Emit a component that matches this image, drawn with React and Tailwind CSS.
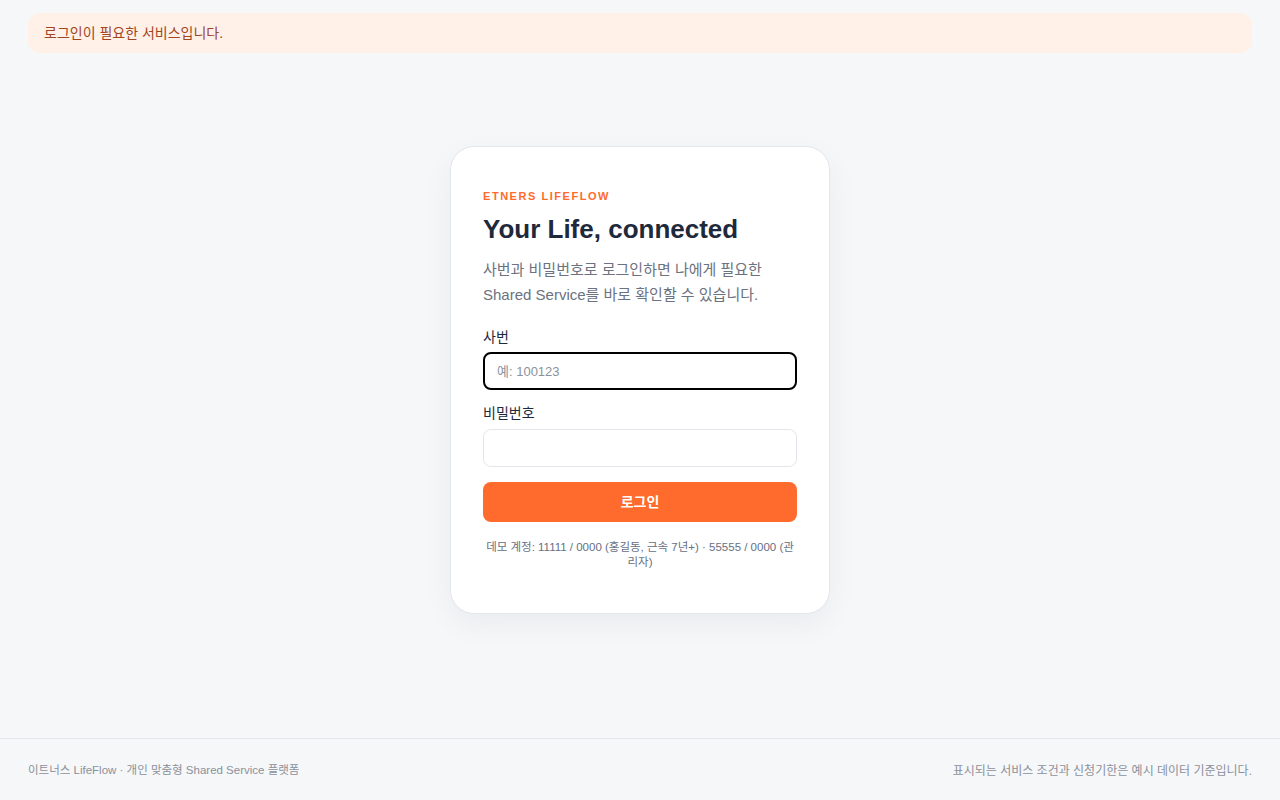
import React, { useState } from "react";

export default function App() {
  const [empNo, setEmpNo] = useState("");
  const [password, setPassword] = useState("");

  return (
    <div
      className="min-h-screen flex flex-col bg-[#f6f7f9] text-[#1e293b]"
      style={{ fontFamily: '"Liberation Sans", "Noto Sans CJK KR", sans-serif' }}
    >
      {/* Notice */}
      <div className="px-7 pt-[13px]">
        <div className="h-10 flex items-center px-4 rounded-xl bg-[#fff0e8] text-[14px] text-[#a0461f]">
          로그인이 필요한 서비스입니다.
        </div>
      </div>

      {/* Login card */}
      <main className="flex justify-center pt-[93px]">
        <div className="w-[380px] bg-white border border-[#e3e6eb] rounded-[24px] shadow-[0_10px_30px_rgba(15,23,42,0.05)] px-8 pt-[41px] pb-[43px]">
          <p className="text-[11px] font-bold tracking-[0.14em] text-[#ff6b2c] leading-4">ETNERS LIFEFLOW</p>
          <h1 className="mt-[7px] text-[26px] font-bold leading-9 text-[#1e293b]">Your Life, connected</h1>
          <p className="mt-[10px] text-[15px] leading-[25px] text-[#6b7280]">
            사번과 비밀번호로 로그인하면 나에게 필요한
            <br />
            Shared Service를 바로 확인할 수 있습니다.
          </p>

          <form className="mt-[20px] flex flex-col" onSubmit={(e) => e.preventDefault()}>
            <label className="text-[14px] leading-5 text-[#1e293b]">사번</label>
            <input
              value={empNo}
              onChange={(e) => setEmpNo(e.target.value)}
              placeholder="예: 100123"
              className="mt-[5px] h-[38px] w-full rounded-lg border-2 border-black px-3 text-[13px] text-[#1e293b] placeholder:text-[#8b929c] outline-none bg-white"
            />
            <label className="mt-[13px] text-[14px] leading-5 text-[#1e293b]">비밀번호</label>
            <input
              type="password"
              value={password}
              onChange={(e) => setPassword(e.target.value)}
              className="mt-[6px] h-[38px] w-full rounded-lg border border-[#e2e5ea] px-3 text-[13px] outline-none bg-white"
            />
            <button
              type="submit"
              className="mt-[15px] h-10 w-full rounded-lg bg-[#ff6b2c] text-white text-[14px] font-bold"
            >
              로그인
            </button>
          </form>

          <p className="mt-[18px] text-center text-[11.5px] leading-[15px] text-[#667085]">
            데모 계정: 11111 / 0000 (홍길동, 근속 7년+) · 55555 / 0000 (관리자)
          </p>
        </div>
      </main>

      {/* Footer */}
      <footer className="mt-auto h-[62px] border-t border-[#e3e6eb] px-7 pt-[2px] flex items-center justify-between text-[12px] text-[#8b919b]">
        <span className="text-[11.5px]">이트너스 LifeFlow · 개인 맞춤형 Shared Service 플랫폼</span>
        <span>표시되는 서비스 조건과 신청기한은 예시 데이터 기준입니다.</span>
      </footer>
    </div>
  );
}
